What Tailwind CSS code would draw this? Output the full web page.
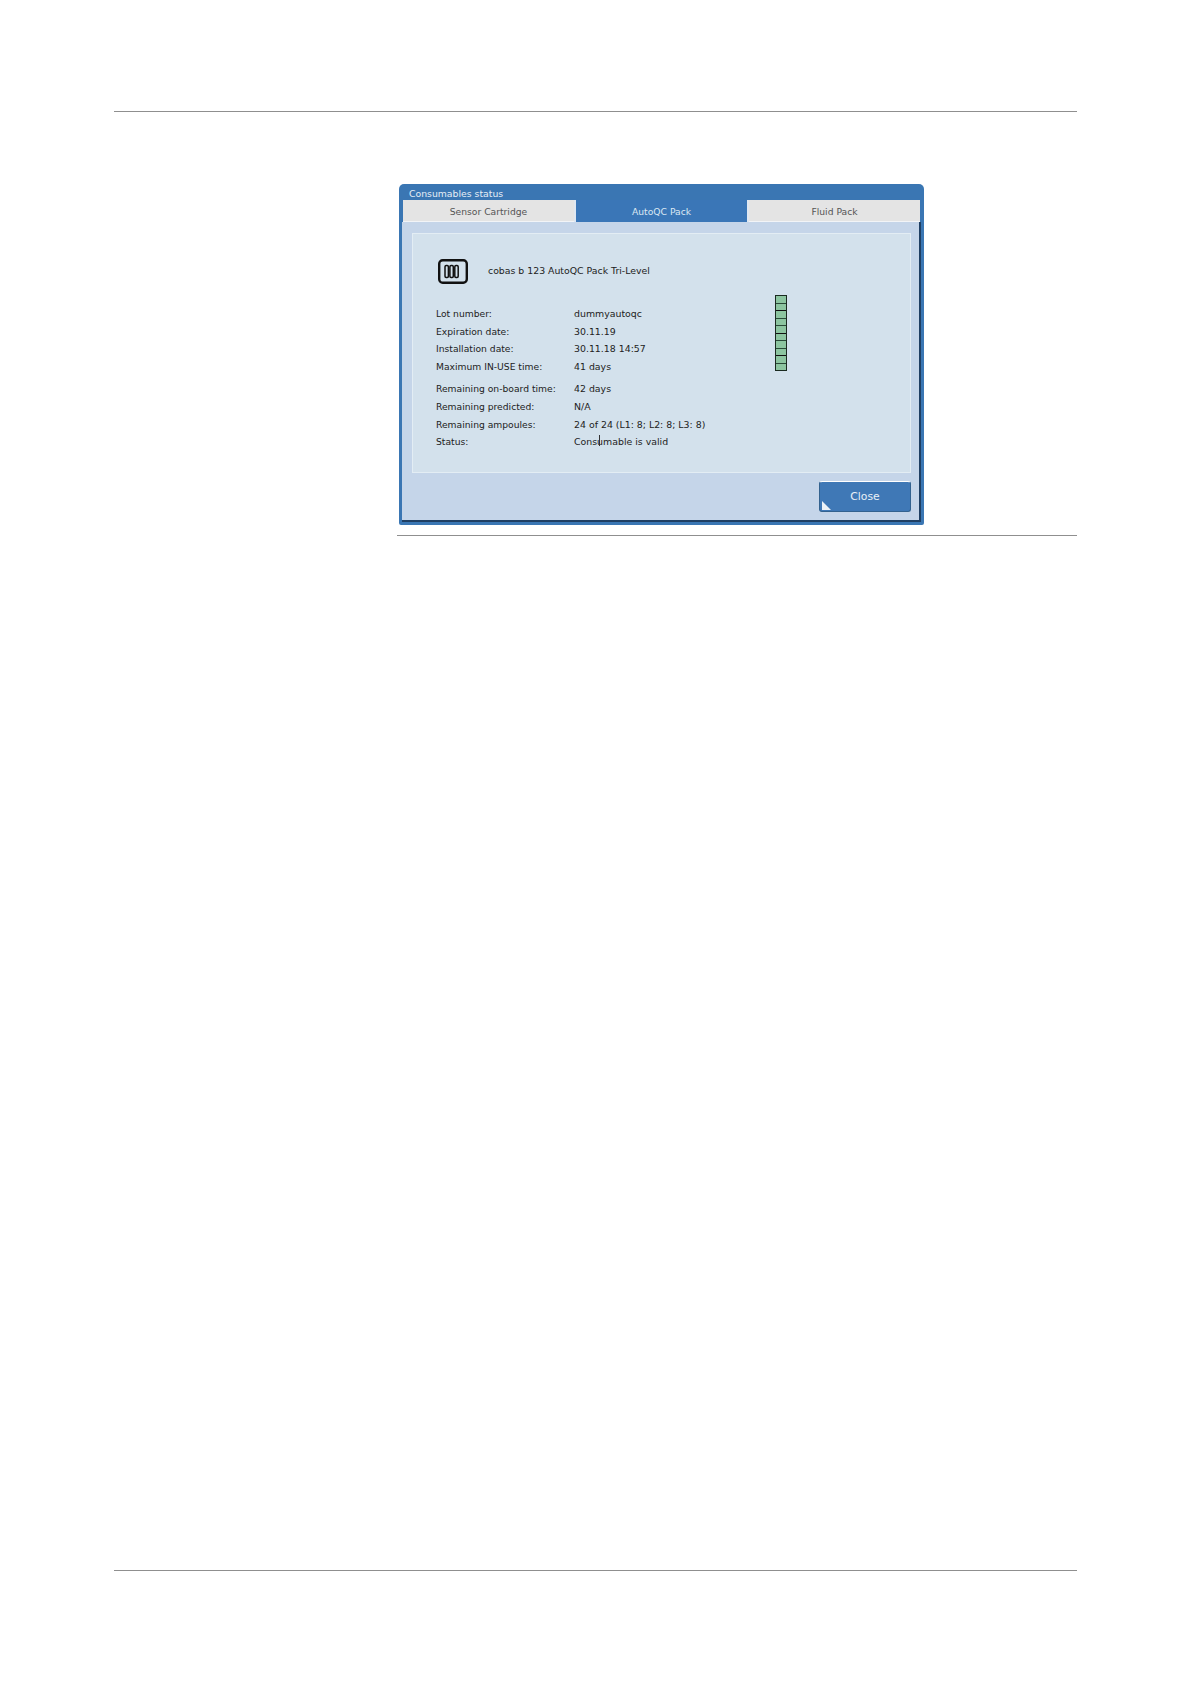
<!DOCTYPE html>
<html lang="en">
<head>
<meta charset="UTF-8" />
<title>Consumables status</title>
<script src="https://cdn.jsdelivr.net/npm/@tailwindcss/browser@4"></script>
</head>
<body class="bg-white font-['DejaVu_Sans',sans-serif]">
<div class="w-[1190px] h-[1684px] overflow-hidden pt-[111px]">
  <div class="ml-[114px] w-[963px] h-px bg-[#8f8f8f]"></div>

  <!-- dialog -->
  <div class="ml-[399px] mt-[72px] w-[525px] h-[341px] flex flex-col rounded-t-[5px] rounded-b-[2px] bg-[#3a76b3] px-[3px] pb-[3px]">
    <div class="h-[16px] pl-[7px] text-[9.3px] leading-[19px] text-[#e6eef6]">Consumables status</div>
    <div class="flex h-[22px] ml-[1px] mr-[1px] text-[9.2px] leading-[23px] text-center">
      <div class="w-[171px] bg-[#e4e4e4] border-b border-[#f2f4f7] text-[#555]">Sensor Cartridge</div>
      <div class="w-[175px] bg-[#3a76b7] border-x-2 border-[#dfe7f1] text-[#dce8f3]">AutoQC Pack</div>
      <div class="flex-1 bg-[#e4e4e4] border-b border-[#f2f4f7] text-[#555]">Fluid Pack</div>
    </div>
    <div class="flex-1 flex flex-col bg-[#c5d5e9] border-b-2 border-r-2 border-[#1f3f63] pl-[10px] pr-[8px] pt-[11px]">
      <div class="relative h-[240px] bg-[#d3e1ec] border border-[#e3edf4] pl-[23px] text-[#222] text-[9.2px]">
        <div class="flex items-center gap-[20px] pt-[25px] h-[49px]">
          <svg width="30" height="25" viewBox="0 0 30 25" class="ml-[2px] shrink-0">
            <rect x="1.2" y="1.2" width="27.6" height="22.6" rx="3.5" fill="none" stroke="#111" stroke-width="2.4" />
            <rect x="7" y="6.5" width="3.4" height="12" rx="1.2" fill="none" stroke="#111" stroke-width="1.5" />
            <rect x="11.9" y="6.5" width="3.4" height="12" rx="1.2" fill="none" stroke="#111" stroke-width="1.5" />
            <rect x="16.8" y="6.5" width="3.4" height="12" rx="1.2" fill="none" stroke="#111" stroke-width="1.5" />
          </svg>
          <span class="text-[9.35px]">cobas b 123 AutoQC Pack Tri-Level</span>
        </div>
        <div class="mt-[22px] grid grid-cols-[138px_1fr] auto-rows-[17.6px] leading-[18px]">
          <span>Lot number:</span><span class="text-[9.4px]">dummyautoqc</span>
          <span>Expiration date:</span><span class="text-[9.4px]">30.11.19</span>
          <span>Installation date:</span><span class="text-[9.4px]">30.11.18 14:57</span>
          <span>Maximum IN-USE time:</span><span class="text-[9.4px]">41 days</span>
        </div>
        <div class="mt-[5px] grid grid-cols-[138px_1fr] auto-rows-[17.6px] leading-[18px]">
          <span>Remaining on-board time:</span><span class="text-[9.4px]">42 days</span>
          <span>Remaining predicted:</span><span class="text-[9.4px]">N/A</span>
          <span>Remaining ampoules:</span><span class="text-[9.4px]">24 of 24 (L1: 8; L2: 8; L3: 8)</span>
          <span>Status:</span><span class="text-[9.4px]">Consumable is valid</span>
        </div>
        <!-- level bar -->
        <div class="absolute left-[362px] top-[61px] w-[12px] h-[76px] flex flex-col border border-[#1a2a20] bg-[#8cc5a0]">
          <div class="flex-1 border-b border-[#2a4a38]"></div>
          <div class="flex-1 border-b border-[#111]"></div>
          <div class="flex-1 border-b border-[#2a4a38]"></div>
          <div class="flex-1 border-b border-[#2a4a38]"></div>
          <div class="flex-1 border-b border-[#111]"></div>
          <div class="flex-1 border-b border-[#2a4a38]"></div>
          <div class="flex-1 border-b border-[#2a4a38]"></div>
          <div class="flex-1 border-b border-[#111]"></div>
          <div class="flex-1 border-b border-[#2a4a38]"></div>
          <div class="flex-1"></div>
        </div>
        <!-- mouse cursor -->
        <div class="absolute left-[186px] top-[201px] w-px h-[11px] bg-[#333]"></div>
      </div>
      <div class="flex justify-end mt-[8px]">
        <div class="relative w-[92px] h-[31px] rounded-[3px] bg-[#3f78b6] border border-[#33628f] border-t-white text-center text-[#e8f0f7] text-[10.8px] leading-[29px]">
          Close
          <div class="absolute left-[2px] bottom-[1px] w-0 h-0 border-l-[9px] border-l-white/90 border-t-[9px] border-t-transparent"></div>
        </div>
      </div>
    </div>
  </div>

  <div class="ml-[397px] mt-[10px] w-[680px] h-px bg-[#8f8f8f]"></div>
  <div class="ml-[114px] mt-[1034px] w-[963px] h-px bg-[#8f8f8f]"></div>
</div>
</body>
</html>
